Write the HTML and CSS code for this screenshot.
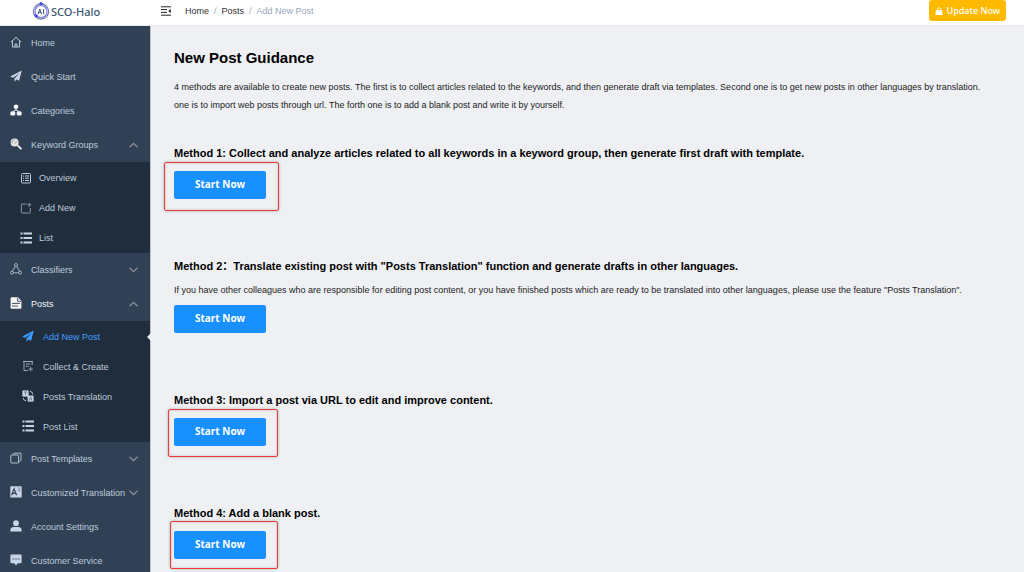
FILE: index.html
```html
<!DOCTYPE html>
<html lang="en">
<head>
  <meta charset="UTF-8">
  <meta name="viewport" content="width=device-width, initial-scale=1.0">
  <title>SCO-Halo - Add New Post</title>
  <link rel="stylesheet" href="styles.css">
</head>
<body>
  <header class="topbar">
    <a class="logo" href="#">
      <svg class="logo-icon" viewBox="0 0 20 20" fill="none">
        <circle cx="10" cy="10.5" r="7.6" stroke="#5d7896" stroke-width="1.1"/>
        <circle cx="10" cy="10.5" r="6" stroke="#7a70f2" stroke-width="1.1"/>
        <circle cx="10" cy="2.6" r="1.5" fill="#4b3bf5"/>
        <circle cx="5.3" cy="15" r="1.4" fill="#4b3bf5"/>
        <path d="M7 13l1.8-5 1.8 5M7.6 11.4h2.4M12.6 8v5" stroke="#3c5672"/>
      </svg>
      <span>SCO-Halo</span>
    </a>
    <button class="collapse" aria-label="Collapse menu">
      <svg viewBox="0 0 10 10" fill="none" stroke="#222"><path d="M0 .8h10M0 3.6h6M0 6.4h6M0 9.2h10"/><path d="M9.8 3v4L7.2 5z" fill="#222" stroke="none"/></svg>
    </button>
    <nav class="breadcrumb" aria-label="Breadcrumb">
      <a href="#">Home</a><span class="sep">/</span><a href="#">Posts</a><span class="sep">/</span><span class="current">Add New Post</span>
    </nav>
    <button class="update">
      <svg viewBox="0 0 8 9"><path d="M.6 3.4h6.8L8 9H0z" fill="#fff"/><path d="M2.2 4V2.6a1.8 1.8 0 0 1 3.6 0V4" fill="none" stroke="#fff" stroke-width=".9"/></svg>
      Update Now
    </button>
  </header>

  <div class="layout">
    <nav class="sidebar" aria-label="Main menu">
      <a class="item" href="#">
        <svg class="icon" viewBox="0 0 12 12" fill="none" stroke="#c3cfdf"><path d="M1 6l5-4.6L11 6M2.4 5v6h7.2V5M5 11V8h2v3"/></svg>
        Home
      </a>
      <a class="item" href="#">
        <svg class="icon" viewBox="0 0 12 12" fill="#c9d5e6"><path d="M11.8.4L.2 6.6l3 1.2L9.6 3 4.5 8.4v3.4l1.9-2.3 2.7 1.2z"/></svg>
        Quick Start
      </a>
      <a class="item" href="#">
        <svg class="icon" viewBox="0 0 12 12" fill="#f2f5f9"><circle cx="6" cy="2.7" r="2.3"/><path d="M5.6 5h.8v2h-.8z"/><rect x=".3" y="7.2" width="5" height="4.4" rx="1.6"/><rect x="6.7" y="7.2" width="5" height="4.4" rx="1.6"/><path d="M3 7.6L5.7 5.8M9 7.6L6.3 5.8" stroke="#f2f5f9"/></svg>
        Categories
      </a>
      <a class="item" href="#">
        <svg class="icon" viewBox="0 0 12 12"><circle cx="4.6" cy="4.4" r="4" fill="#e6e6e6"/><path d="M2.4 5.5A2.4 2.4 0 0 1 4.7 2M5 5.6l1.6-2.4" fill="none" stroke="#777" stroke-width=".8"/><path d="M7.6 7.4l3.8 3.8" stroke="#f2f2f2" stroke-width="1.8"/></svg>
        Keyword Groups
        <svg class="arrow" viewBox="0 0 8 5"><path d="M.5 4.5L4 1l3.5 3.5"/></svg>
      </a>
      <div class="submenu">
        <a class="item" href="#">
          <svg class="icon" viewBox="0 0 12 12" fill="none" stroke="#bfcbd9"><rect x="1.5" y="1.5" width="9" height="9.5" rx="1"/><path d="M3 4h1M5 4h4M3 6.2h1M5 6.2h4M3 8.5h1M5 8.5h4"/></svg>
          Overview
        </a>
        <a class="item" href="#">
          <svg class="icon" viewBox="0 0 12 12" fill="none" stroke="#8796a8"><path d="M6.5 2H2a.7.7 0 0 0-.7.7v7.6c0 .4.3.7.7.7h7.6c.4 0 .7-.3.7-.7V6M9.3.8v4M7.3 2.8h4"/></svg>
          Add New
        </a>
        <a class="item" href="#">
          <svg class="icon" viewBox="0 0 12 12" fill="none" stroke="#c9d5e6" stroke-width="1.8"><path d="M.5 1.5h2M3.5 1.5H12M.5 6h2M3.5 6H12M.5 10.5h2M3.5 10.5H12"/></svg>
          List
        </a>
      </div>
      <a class="item" href="#">
        <svg class="icon" viewBox="0 0 12 12" fill="none" stroke="#b3c0d0" stroke-width=".9"><circle cx="6" cy="2" r="1.5"/><circle cx="2" cy="9.6" r="1.5"/><circle cx="10" cy="9.6" r="1.5"/><path d="M5.3 3.3L2.4 8M6.7 3.3L9.6 8M3.5 9.8h5"/></svg>
        Classifiers
        <svg class="arrow" viewBox="0 0 8 5"><path d="M.5.5L4 4 7.5.5"/></svg>
      </a>
      <a class="item open" href="#">
        <svg class="icon" viewBox="0 0 12 12"><path d="M1.5.3H8L11.4 4v6.8a.9.9 0 0 1-.9.9h-9a.9.9 0 0 1-.9-.9V1.2c0-.5.4-.9.9-.9z" fill="#f4f4f5"/><path d="M7.6.8v3.5h3.2M2 6.4h8M2 9h6" fill="none" stroke="#304156" stroke-width=".9"/></svg>
        Posts
        <svg class="arrow" viewBox="0 0 8 5"><path d="M.5 4.5L4 1l3.5 3.5"/></svg>
      </a>
      <div class="submenu deep">
        <a class="item active" href="#">
          <svg class="icon" viewBox="0 0 12 12" fill="#409eff"><path d="M11.8.4L.2 6.6l3 1.2L9.6 3 4.5 8.4v3.4l1.9-2.3 2.7 1.2z"/></svg>
          Add New Post
        </a>
        <a class="item" href="#">
          <svg class="icon" viewBox="0 0 12 12" fill="none" stroke="#a3b0c0" stroke-width=".9"><path d="M10.2 5V1.5H2v9h4M1 1.5h10M3.8 4h4.6M3.8 6.3h3M8.7 6.8v4.6M6.4 9.1H11"/></svg>
          Collect &amp; Create
        </a>
        <a class="item" href="#">
          <svg class="icon" viewBox="0 0 12 12" fill="none"><rect x=".4" y=".4" width="6.2" height="6.2" fill="#c9d5e6"/><rect x="5.6" y="5.6" width="6" height="6" fill="#c9d5e6"/><path d="M2 2h3M3.5 2v3M7.3 10.5l1.3-3.4 1.3 3.4" stroke="#5a6b80" stroke-width=".8"/><path d="M8 1.4a3 3 0 0 1 2.8 3M4 10.8A3 3 0 0 1 1.2 8" stroke="#c9d5e6" stroke-width=".9"/></svg>
          Posts Translation
        </a>
        <a class="item" href="#">
          <svg class="icon" viewBox="0 0 12 12" fill="none" stroke="#c9d5e6" stroke-width="1.8"><path d="M.5 1.5h2M3.5 1.5H12M.5 6h2M3.5 6H12M.5 10.5h2M3.5 10.5H12"/></svg>
          Post List
        </a>
      </div>
      <a class="item" href="#">
        <svg class="icon" viewBox="0 0 12 12" fill="none" stroke="#b3c0d0"><rect x=".8" y="3" width="7.8" height="8" rx=".8"/><path d="M3 2.8L4 1.2h7v7L9 10"/></svg>
        Post Templates
        <svg class="arrow" viewBox="0 0 8 5"><path d="M.5.5L4 4 7.5.5"/></svg>
      </a>
      <a class="item" href="#">
        <svg class="icon" viewBox="0 0 12 12" fill="none"><rect x=".3" y=".3" width="11.4" height="11.2" rx=".6" fill="#c9d5e6"/><path d="M1.6 9.3l2.5-6.4 2.5 6.4M2.5 7.3h3.2" stroke="#304156" stroke-width="1.2"/><path d="M7.4 2h3L9 3.4l1.4 1.2H7.6" stroke="#7688a0" stroke-width=".7"/></svg>
        Customized Translation
        <svg class="arrow" viewBox="0 0 8 5"><path d="M.5.5L4 4 7.5.5"/></svg>
      </a>
      <a class="item" href="#">
        <svg class="icon" viewBox="0 0 12 12" fill="#c9d5e6"><circle cx="6" cy="3.2" r="2.9"/><path d="M.4 11.6V9.8C.4 8 2 7 3.6 7h4.8c1.6 0 3.2 1 3.2 2.8v1.8z"/></svg>
        Account Settings
      </a>
      <a class="item" href="#">
        <svg class="icon" viewBox="0 0 12 12"><path d="M1.4.4h9.2c.6 0 1 .4 1 1v6.8c0 .6-.4 1-1 1H7.8L6 11.6 4.2 9.2H1.4c-.6 0-1-.4-1-1V1.4c0-.6.4-1 1-1z" fill="#c9d5e6"/><path d="M2.6 5h1.5M5.3 5h1.5M8 5h1.5" stroke="#304156" stroke-width="1.2"/></svg>
        Customer Service
      </a>
    </nav>

    <main class="content">
      <h1>New Post Guidance</h1>
      <p class="intro">4 methods are available to create new posts. The first is to collect articles related to the keywords, and then generate draft via templates. Second one is to get new posts in other languages by translation.<br>
      one is to import web posts through url. The forth one is to add a blank post and write it by yourself.</p>

      <section class="method">
        <h2>Method 1: Collect and analyze articles related to all keywords in a keyword group, then generate first draft with template.</h2>
        <div class="action marked first"><button class="start">Start Now</button></div>
      </section>
      <section class="method">
        <h2>Method 2：Translate existing post with "Posts Translation" function and generate drafts in other languages.</h2>
        <p>If you have other colleagues who are responsible for editing post content, or you have finished posts which are ready to be translated into other languages, please use the feature "Posts Translation".</p>
        <div class="action"><button class="start">Start Now</button></div>
      </section>
      <section class="method">
        <h2>Method 3: Import a post via URL to edit and improve content.</h2>
        <div class="action marked third"><button class="start">Start Now</button></div>
      </section>
      <section class="method">
        <h2>Method 4: Add a blank post.</h2>
        <div class="action marked fourth"><button class="start">Start Now</button></div>
      </section>
    </main>
  </div>
</body>
</html>
```
FILE: styles.css
```css
* {
  box-sizing: border-box;
}
body {
  margin: 0;
  height: 100vh;
  display: flex;
  flex-direction: column;
  overflow: hidden;
  font-family: "Liberation Sans", Arial, "Noto Sans CJK SC", sans-serif;
  font-size: 9px;
  background: #eef0f4;
  color: #222;
}
a {
  color: inherit;
  text-decoration: none;
}
button {
  border: none;
  padding: 0;
  background: none;
  cursor: pointer;
}
h1, h2, p {
  margin: 0;
}

/* top bar */
.topbar {
  display: flex;
  align-items: flex-start;
  flex: none;
  height: 26px;
  background: #fff;
  border-bottom: 1px solid #e6e8ee;
}
.logo {
  display: flex;
  align-items: center;
  width: 150px;
  height: 22px;
  padding-left: 31px;
  font-family: "Noto Sans", sans-serif;
  font-size: 11px;
  font-weight: 500;
  color: #3c5672;
}
.logo-icon {
  width: 20px;
  height: 20px;
}
.collapse {
  height: 21px;
  margin: 0 14px 0 11px;
}
.collapse svg {
  display: block;
  width: 10px;
  height: 10px;
}
.breadcrumb {
  line-height: 22px;
  color: #303133;
}
.sep {
  margin: 0 5px;
  color: #a8abb2;
}
.current {
  color: #97a8be;
}
.update {
  display: flex;
  align-items: center;
  gap: 4px;
  height: 21px;
  margin-left: auto;
  margin-right: 18px;
  padding: 0 6px;
  border-radius: 3px;
  background: #ffba00;
  font-family: "Noto Sans", sans-serif;
  font-size: 9px;
  font-weight: 500;
  color: #fff;
}
.update svg {
  width: 8px;
  height: 8px;
}

.layout {
  display: flex;
  flex: 1;
  min-height: 0;
}

/* sidebar */
.sidebar {
  flex: none;
  width: 151px;
  border-right: 1px solid #bcc4cf;
  background: #304156;
  color: #bfcbd9;
}
.item {
  position: relative;
  display: flex;
  align-items: center;
  height: 34px;
  padding: 0 12px 0 10px;
}
.icon {
  flex: none;
  width: 12px;
  height: 12px;
  margin-right: 9px;
  margin-bottom: 2px;
}
.arrow {
  width: 9px;
  height: 6px;
  margin-left: auto;
  fill: none;
  stroke: #909399;
}
.open {
  color: #f4f4f5;
}
.submenu {
  padding-top: 1px;
  background: #1f2d3d;
}
.submenu .item {
  height: 30px;
  padding-left: 20px;
}
.submenu .icon {
  margin-right: 7px;
  margin-bottom: 0;
}
.submenu.deep .item {
  padding-left: 22px;
}
.submenu.deep .icon {
  margin-right: 9px;
  margin-bottom: 2px;
}
.submenu .active {
  color: #409eff;
}
.active::after {
  content: "";
  position: absolute;
  top: 11px;
  right: -1px;
  border: 4px solid transparent;
  border-left-width: 0;
  border-right-color: #eef0f4;
}

/* content */
.content {
  flex: 1;
  min-width: 0;
  padding: 22px 0 0 23px;
  line-height: 18px;
  white-space: nowrap;
}
h1 {
  margin-bottom: 10px;
  font-size: 15px;
  line-height: 20px;
  color: #000;
}
.intro {
  margin-bottom: 30px;
}
.method {
  margin-bottom: 58px;
}
h2 {
  font-size: 11px;
  line-height: 18px;
  color: #000;
}
.method p {
  margin: 6px 0;
}
.action {
  position: relative;
  width: max-content;
}
h2 + .action {
  margin-top: 9px;
}
.start {
  display: block;
  width: 92px;
  height: 28px;
  padding-bottom: 2px;
  border-radius: 2px;
  background: #1890ff;
  font-family: "Noto Sans", sans-serif;
  font-size: 10px;
  font-weight: 700;
  color: #fff;
}

/* red frames around the start buttons */
.marked::after {
  content: "";
  position: absolute;
  border: 1px solid #f03a3a;
  border-radius: 2px;
  box-shadow: 0 0 3px rgba(0, 0, 0, 0.3), inset 0 0 3px rgba(0, 0, 0, 0.2);
  pointer-events: none;
}
.first::after {
  inset: -9px -13px -12px -10px;
}
.third::after {
  inset: -9px -12px -11px -6px;
}
.fourth::after {
  inset: -10px -12px -10px -4px;
}
```
